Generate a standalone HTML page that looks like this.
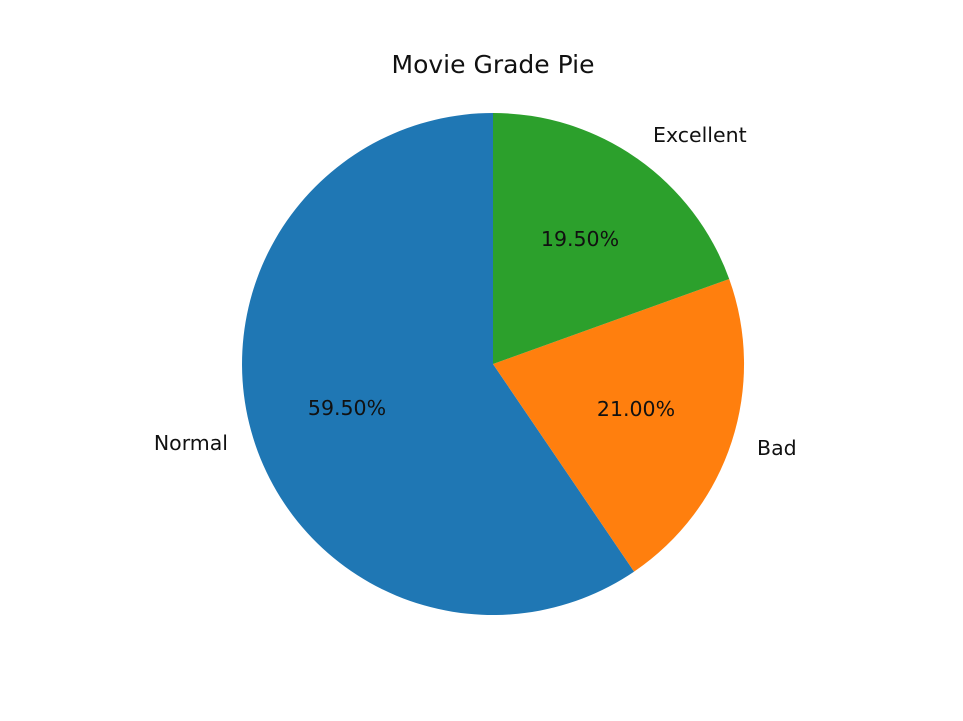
<!DOCTYPE html>
<html><head><meta charset="utf-8"><style>
html,body{margin:0;padding:0;background:#fff;}
svg{display:block;}
text{font-family:"DejaVu Sans","Liberation Sans",sans-serif;fill:#111;}
</style></head><body>
<svg width="963" height="721" viewBox="0 0 963 721">
<rect width="963" height="721" fill="#fff"/>
<path d="M493,364 L493,113 A251,251 0 1 0 634.1,571.6 Z" fill="#1f77b4"/>
<path d="M493,364 L634.1,571.6 A251,251 0 0 0 729.2,279 Z" fill="#ff7f0e"/>
<path d="M493,364 L729.2,279 A251,251 0 0 0 493,113 Z" fill="#2ca02c"/>
<text x="493" y="73" font-size="25" text-anchor="middle">Movie Grade Pie</text>
<text x="653" y="142" font-size="20.5">Excellent</text>
<text x="757" y="455" font-size="20.5">Bad</text>
<text x="228" y="450" font-size="20.5" text-anchor="end">Normal</text>
<text x="347" y="415" font-size="20.5" text-anchor="middle">59.50%</text>
<text x="636" y="416" font-size="20.5" text-anchor="middle">21.00%</text>
<text x="580" y="246" font-size="20.5" text-anchor="middle">19.50%</text>
</svg>
</body></html>
